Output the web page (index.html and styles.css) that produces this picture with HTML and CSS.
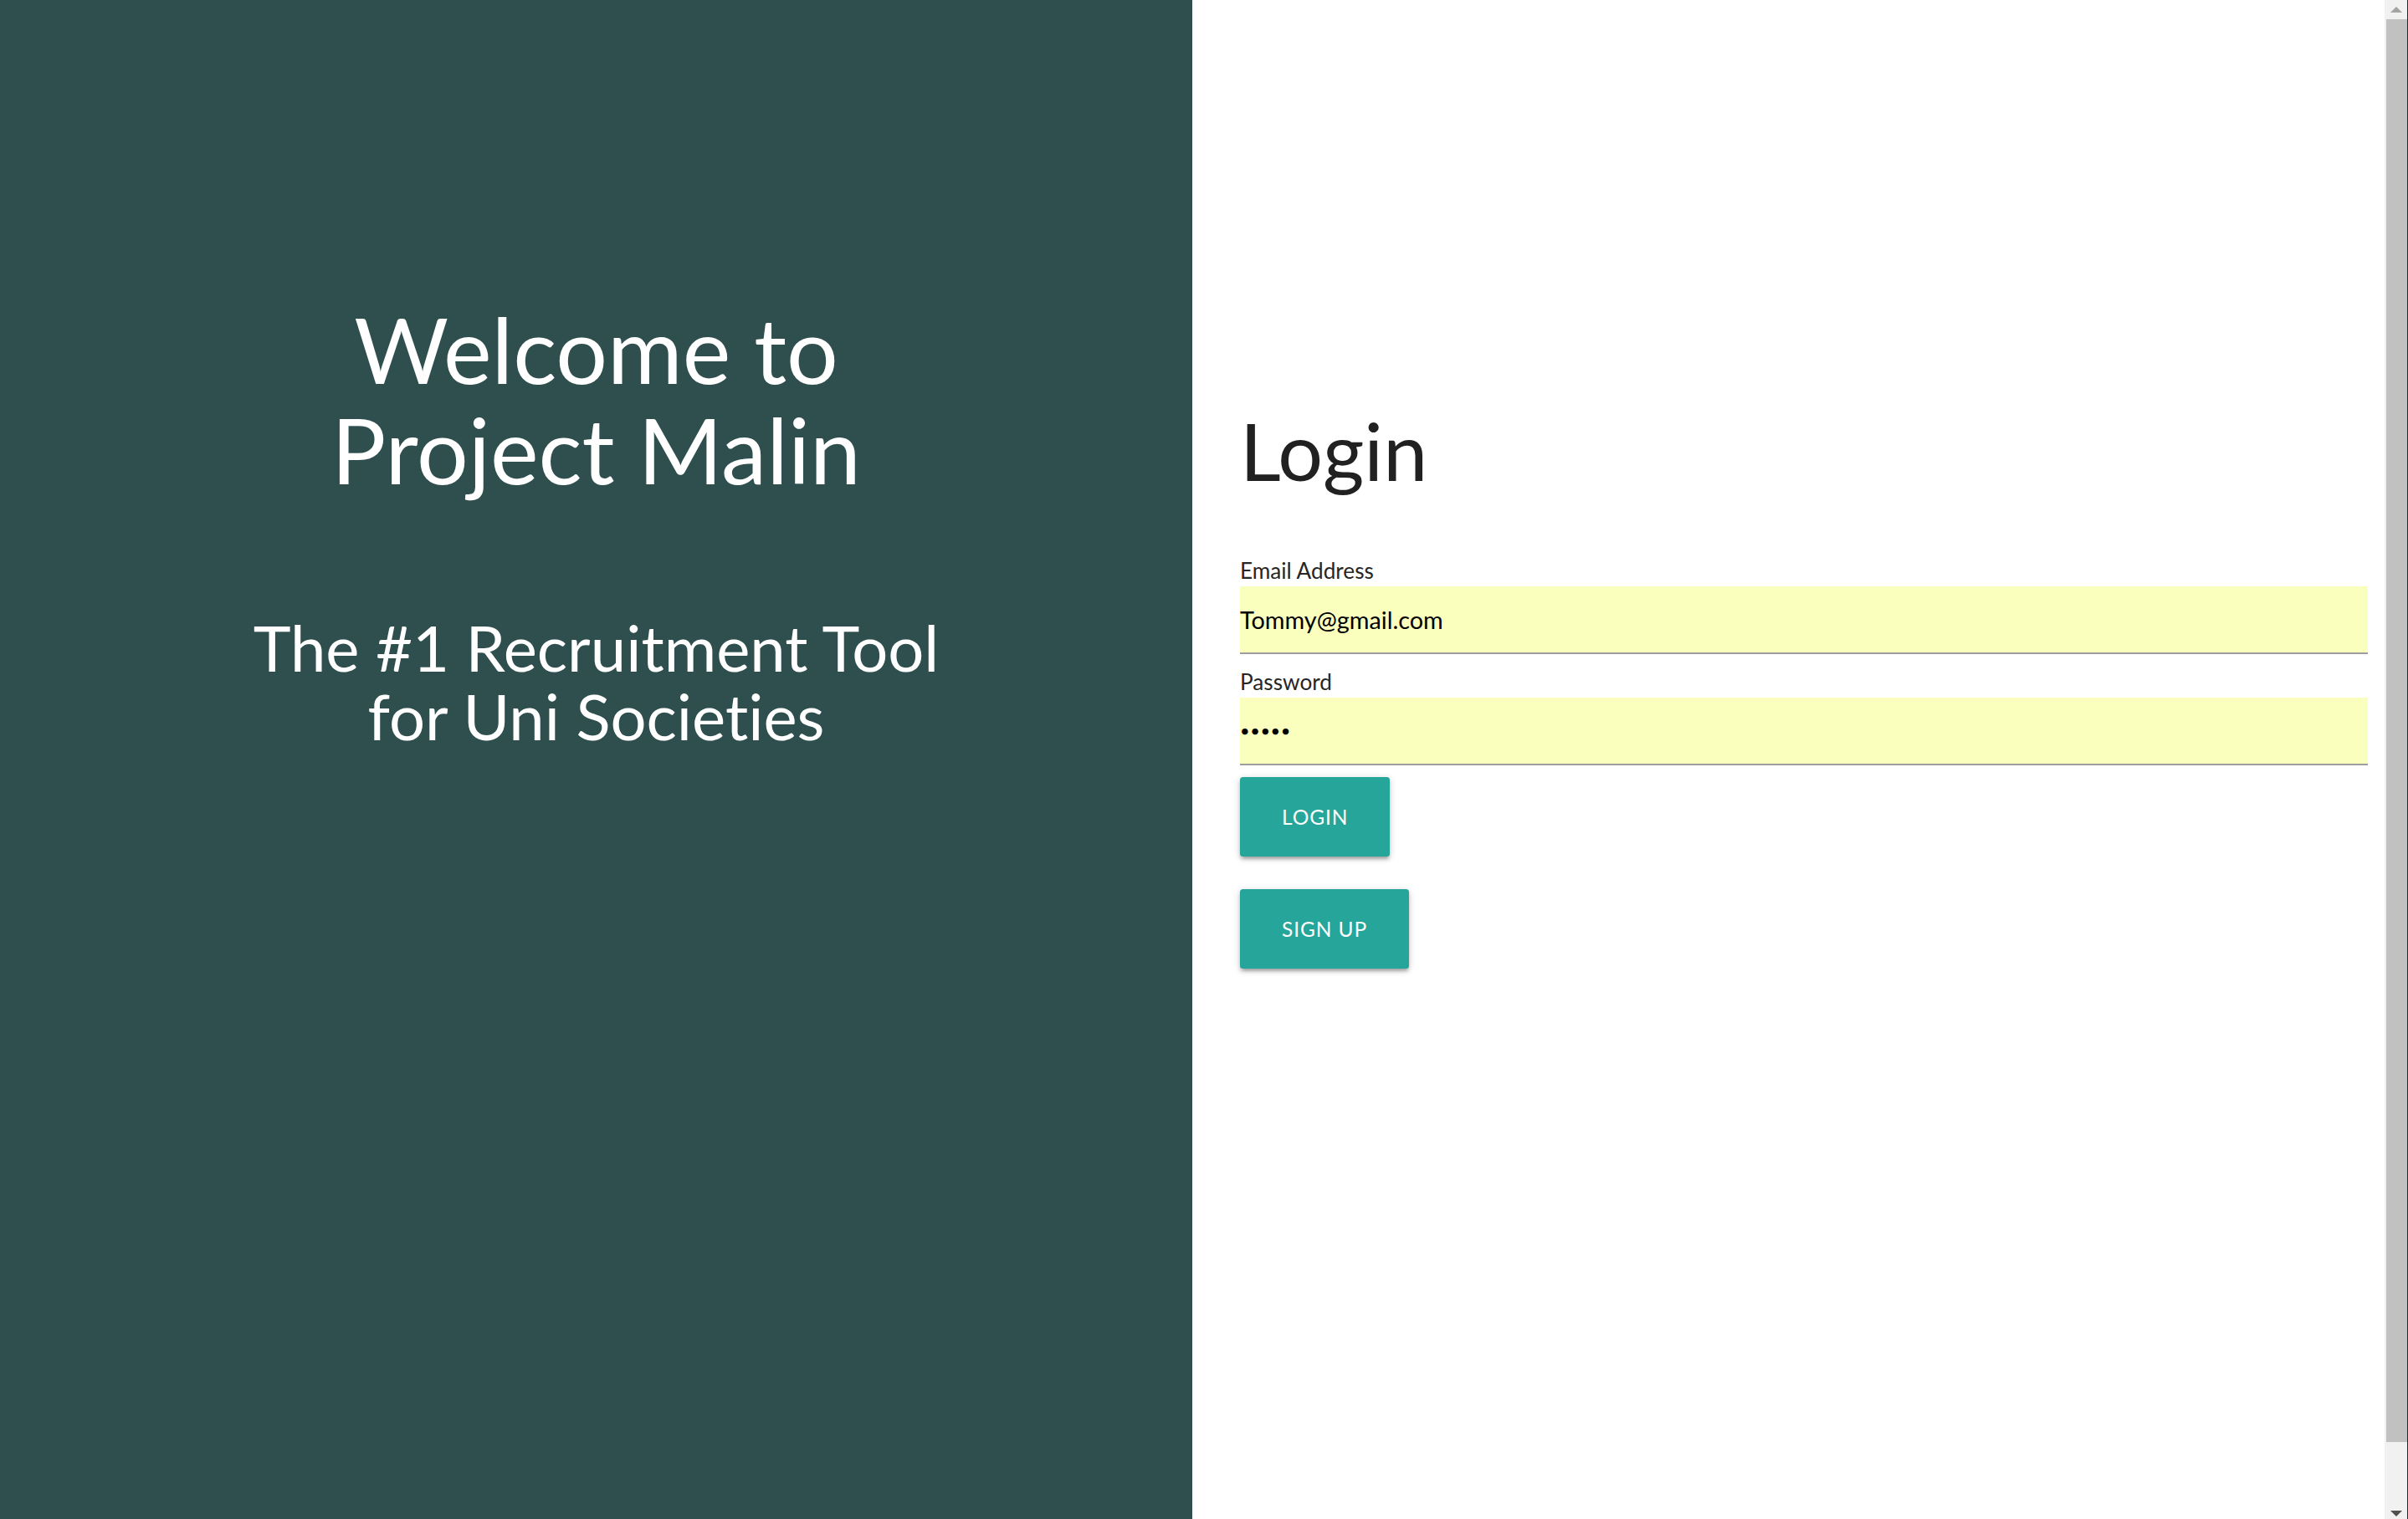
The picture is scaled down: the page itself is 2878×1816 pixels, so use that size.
FILE: index.html
```html
<!DOCTYPE html>
<html>
<head>
<meta charset="utf-8">
<title>Project Malin</title>
<link rel="stylesheet" href="styles.css">
</head>
<body>
<div class="app">
  <section class="hero">
    <h1 class="hero-title">Welcome to<br>Project Malin</h1>
    <h3 class="hero-sub">The #1 Recruitment Tool<br>for Uni Societies</h3>
  </section>
  <section class="auth">
    <h2 class="auth-title">Login</h2>
    <form class="form">
      <div class="field">
        <label class="label" for="email">Email Address</label>
        <input class="input" id="email" type="email" value="Tommy@gmail.com">
      </div>
      <div class="field">
        <label class="label" for="password">Password</label>
        <input class="input input-password" id="password" type="password" value="abcde">
      </div>
      <button class="btn" type="button">Login</button>
      <button class="btn btn-signup" type="button">Sign Up</button>
    </form>
  </section>
  <div class="scrollbar">
    <div class="sb-arrow sb-up"></div>
    <div class="sb-thumb"></div>
    <div class="sb-arrow sb-down"></div>
  </div>
</div>
</body>
</html>
```
FILE: styles.css
```css
html, body {
  margin: 0;
  padding: 0;
  height: 100%;
}

body {
  font-family: Lato, "Liberation Sans", sans-serif;
  font-variant-ligatures: none;
  background: #ffffff;
  overflow: hidden;
}

.app {
  display: grid;
  grid-template-columns: 1fr 1fr 28px;
  height: 1816px;
}

.hero {
  background: #2f4f4f;
  color: #ffffff;
  text-align: center;
  padding-top: 357px;
}

.hero-title {
  margin: 0;
  font-size: 109px;
  line-height: 120px;
  font-weight: 400;
}

.hero-sub {
  margin: 136px 0 0;
  font-size: 76px;
  line-height: 82px;
  font-weight: 400;
}

.auth {
  padding: 481px 20px 0 57px;
  color: #212121;
}

.auth-title {
  margin: 0;
  font-size: 95px;
  line-height: 114px;
  font-weight: 400;
}

.form {
  margin-top: 72px;
  display: flex;
  flex-direction: column;
  align-items: flex-start;
}

.field {
  display: flex;
  flex-direction: column;
  align-self: stretch;
  margin-bottom: 17.5px;
}

.field + .field {
  margin-bottom: 14px;
}

.label {
  font-size: 26.2px;
  line-height: 31.5px;
  color: #262626;
  margin-bottom: 2.5px;
}

.input {
  box-sizing: border-box;
  height: 81px;
  margin: 0;
  padding: 0;
  border: none;
  border-bottom: 2px solid #9e9e9e;
  background: #faffbd;
  font-family: Lato, "Liberation Sans", sans-serif;
  font-size: 28.8px;
  color: #000000;
  outline: none;
}

.input-password {
  font-size: 20px;
  letter-spacing: 0.6px;
}

.btn {
  height: 95px;
  padding: 0 50px;
  border: none;
  border-radius: 3.5px;
  background: #26a69a;
  color: #ffffff;
  font-family: Lato, "Liberation Sans", sans-serif;
  font-size: 24.5px;
  letter-spacing: 0.9px;
  text-transform: uppercase;
  box-shadow: 0 3.5px 3.5px 0 rgba(0, 0, 0, 0.14),
              0 5px 2px -3.5px rgba(0, 0, 0, 0.12),
              0 2px 9px 0 rgba(0, 0, 0, 0.2);
  cursor: pointer;
}

.btn-signup {
  margin-top: 39px;
}

.scrollbar {
  background: #f1f1f1;
  display: flex;
  flex-direction: column;
  align-items: stretch;
  border-right: 1px solid #1c2b2b;
}

.sb-arrow {
  height: 23px;
  display: flex;
  justify-content: center;
  align-items: center;
}

.sb-up::after,
.sb-down::after {
  content: "";
  width: 0;
  height: 0;
  border-left: 7px solid transparent;
  border-right: 7px solid transparent;
}

.sb-up::after {
  border-bottom: 7px solid #a3a3a3;
}

.sb-down {
  margin-top: auto;
}

.sb-down::after {
  border-top: 7px solid #505050;
  margin-top: 10px;
}

.sb-thumb {
  height: 1701px;
  margin-left: 2px;
  background: #c1c1c1;
}
```
